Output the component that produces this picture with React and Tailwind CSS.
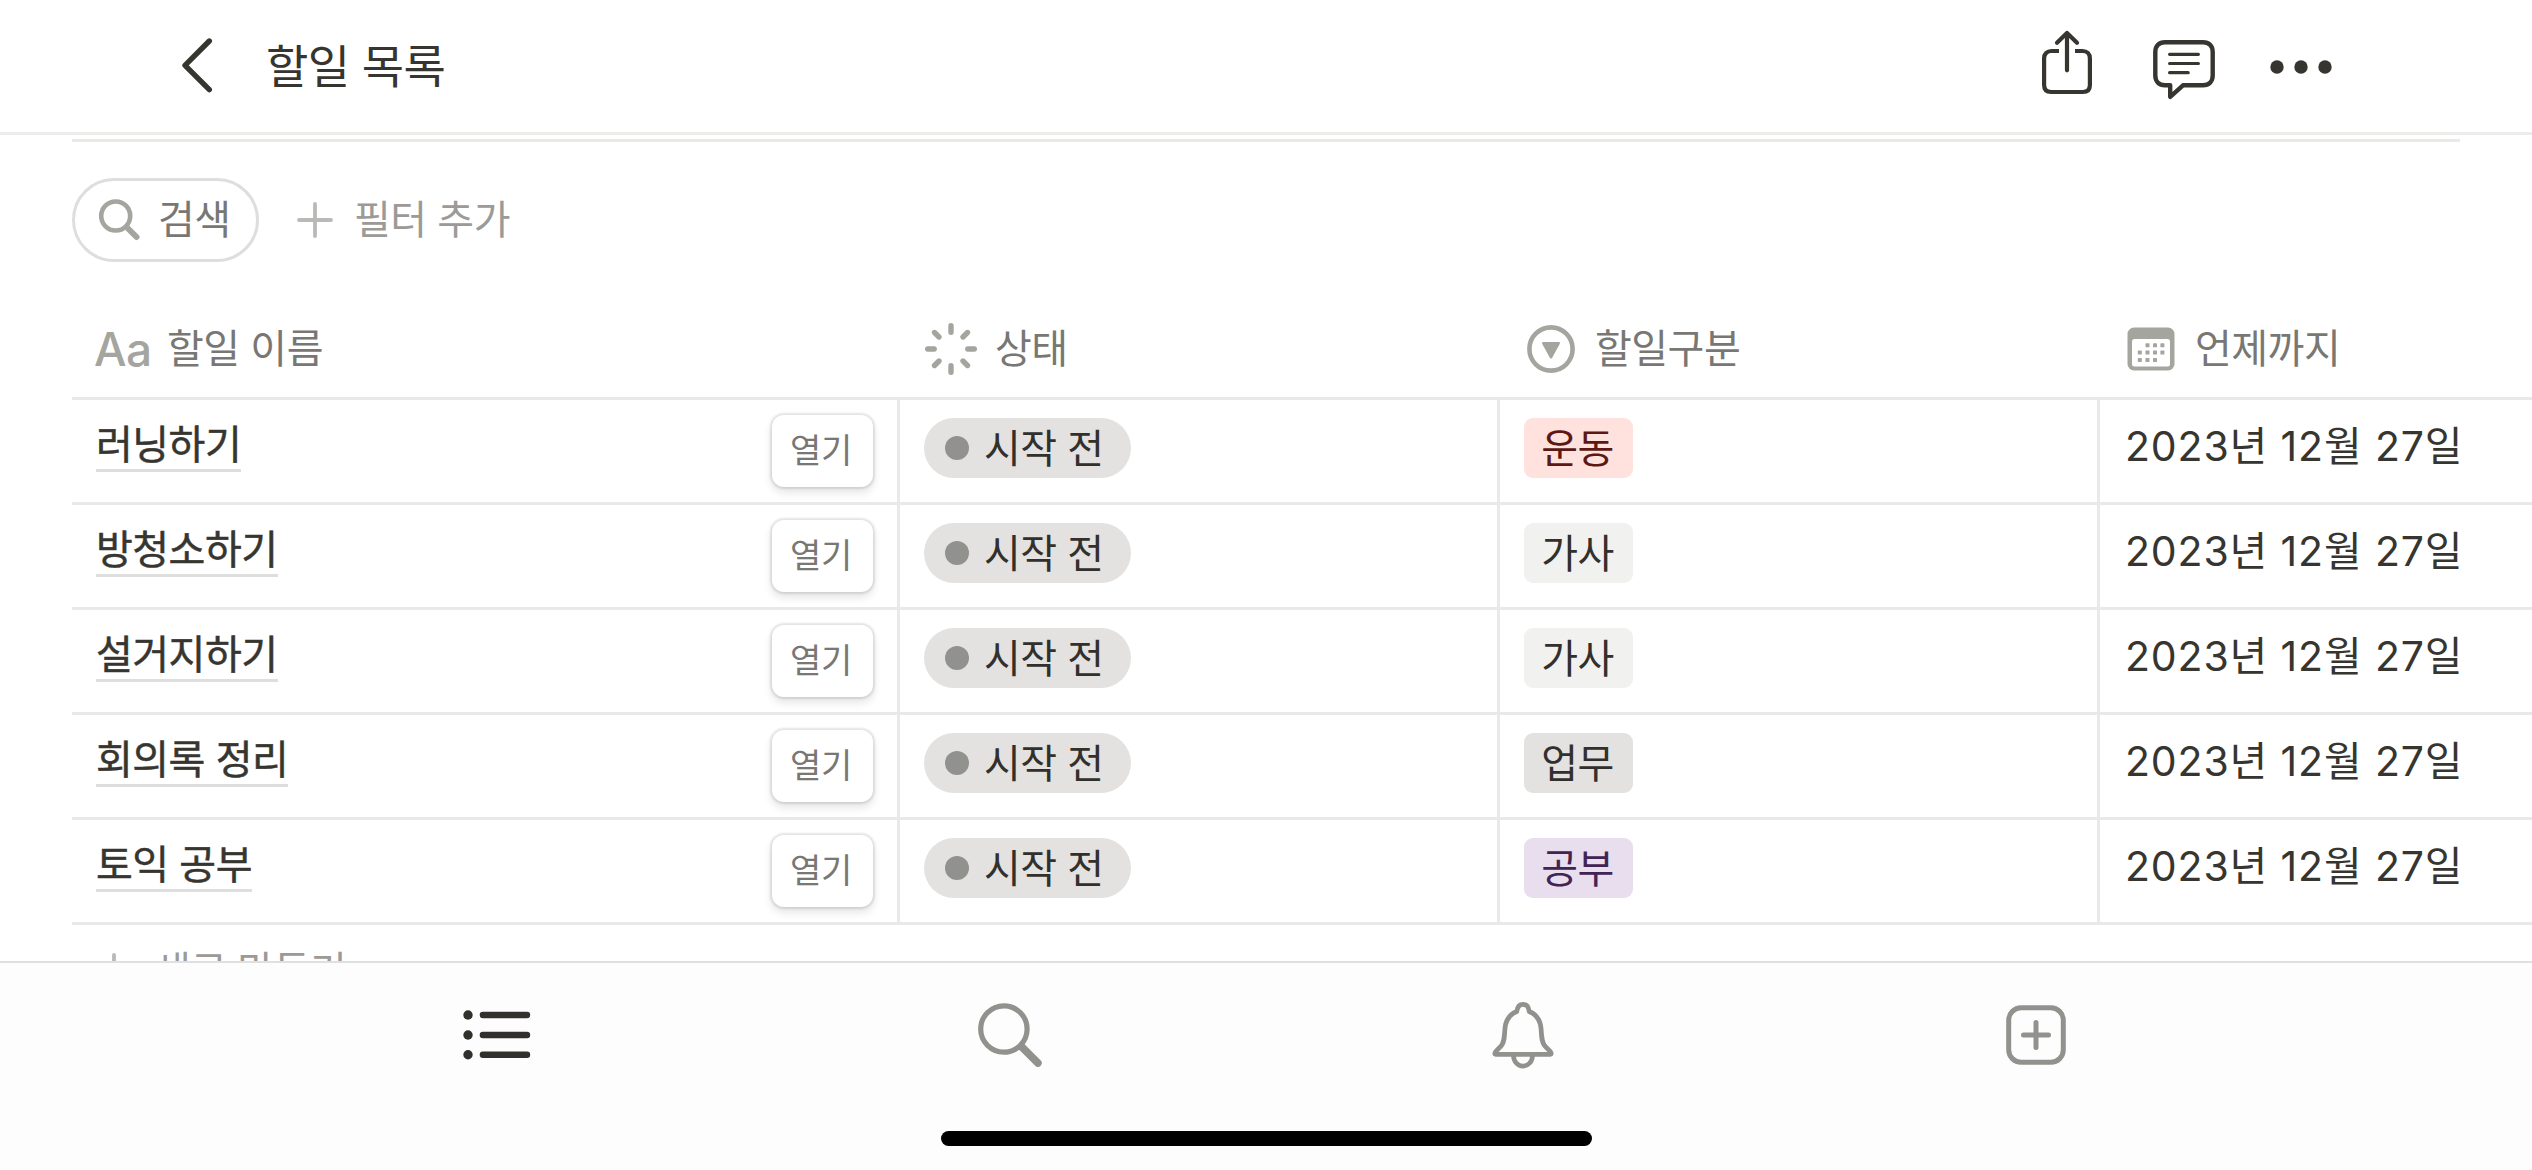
/* -------------------- DATA -------------------- */
const todos = [
  { name: "러닝하기", tag: "운동", tagClass: "bg-[#ffe2dd] text-[#5d1715]" },
  { name: "방청소하기", tag: "가사", tagClass: "bg-[#f1f1ef] text-[#32302c]" },
  { name: "설거지하기", tag: "가사", tagClass: "bg-[#f1f1ef] text-[#32302c]" },
  { name: "회의록 정리", tag: "업무", tagClass: "bg-[#e3e2e0] text-[#32302c]" },
  { name: "토익 공부", tag: "공부", tagClass: "bg-[#e8deee] text-[#412454]" },
];

/* -------------------- ICONS -------------------- */
function BackIcon() {
  return (
    <svg width="32" height="56" viewBox="0 0 32 56" fill="none" stroke="currentColor" strokeWidth="5.4" strokeLinecap="round" strokeLinejoin="round">
      <path d="M27.3 3 3 27.3l24.300 24.400" />
    </svg>
  );
}

function ShareIcon() {
  return (
    <svg width="50" height="72" viewBox="0 0 50 72" fill="none" stroke="currentColor" strokeWidth="4.2">
      <path d="M17 21H9.5c-4.5 0-7.4 3-7.4 7.400V55c0 4.500 2.500 7 7 7h31.800c4.500 0 7-2.500 7-7V28.400c0-4.400-2.900-7.400-7.400-7.400H33" />
      <path d="M25 40.300V3M15 12.800 25 3l10 9.800" strokeLinecap="round" strokeLinejoin="round" />
    </svg>
  );
}

function CommentIcon() {
  return (
    <svg width="62" height="60" viewBox="0 0 62 60" fill="none" stroke="currentColor" strokeLinecap="round" strokeLinejoin="round">
      <path strokeWidth="4.400" d="M12 2.300h38c6 0 9.700 3.700 9.700 9.700v23.500c0 6-3.700 9.800-9.700 9.800H30L17.200 56.800V45.300H12c-6 0-9.700-3.800-9.700-9.800V12c0-6 3.700-9.700 9.700-9.700Z" />
      <path strokeWidth="3.200" d="M16.600 14.300h28.800M16.600 23.500h28.800M16.600 32.700h18.600" />
    </svg>
  );
}

function MoreIcon() {
  return (
    <svg width="62" height="14" viewBox="0 0 62 14" fill="currentColor">
      <circle cx="7" cy="7" r="6.700" />
      <circle cx="31" cy="7" r="6.700" />
      <circle cx="55" cy="7" r="6.700" />
    </svg>
  );
}

function FilterSearchIcon() {
  return (
    <svg width="42" height="42" viewBox="0 0 42 42" fill="none" stroke="#a5a59f" strokeLinecap="round">
      <circle cx="17.700" cy="17" r="14.500" strokeWidth="4.600" />
      <path d="m28.500 28 10 10" strokeWidth="6" />
    </svg>
  );
}

function PlusIcon() {
  return (
    <svg width="36" height="36" viewBox="0 0 36 36" stroke="#b9b9b7" strokeWidth="3.800" strokeLinecap="round">
      <path d="M18 2v32M2 18h32" />
    </svg>
  );
}

function StatusIcon() {
  return (
    <svg width="54" height="54" viewBox="0 0 54 54" stroke="#a5a59f" strokeWidth="5.400" strokeLinecap="round">
      <path d="M27 3.700v6.500M27 43.800v6.500M3.700 27h6.500M43.800 27h6.500M10.500 10.500l4.500 4.500M39 39l4.500 4.500M10.500 43.500 15 39M39 15l4.500-4.500" />
    </svg>
  );
}

function SelectIcon() {
  return (
    <svg width="48" height="48" viewBox="0 0 48 48" fill="none">
      <circle cx="24" cy="24" r="21.600" stroke="#a5a59f" strokeWidth="4.600" />
      <path d="M16.200 18.200h15.600L24 32.300Z" fill="#a5a59f" stroke="#a5a59f" strokeWidth="2.400" strokeLinejoin="round" />
    </svg>
  );
}

function CalendarIcon() {
  const dots = [
    [20.500, 18.300], [28, 18.300], [35.400, 18.300],
    [12.800, 25.600], [20.500, 25.600], [28, 25.600], [35.400, 25.600],
    [12.800, 33], [20.500, 33], [28, 33],
  ];

  return (
    <svg width="48" height="44" viewBox="0 0 48 44" fill="#a5a59f">
      <rect x="0.500" y="0.500" width="47" height="43" rx="6.500" />
      <rect x="5" y="12" width="38" height="27.500" rx="2.500" fill="#fff" />
      {dots.map(([x, y]) => (
        <rect key={`${x}-${y}`} x={x - 2} y={y - 2} width="4" height="4" rx="0.600" />
      ))}
    </svg>
  );
}

function ListIcon() {
  return (
    <svg width="68" height="50" viewBox="0 0 68 50" fill="#32302c">
      {[5, 25, 44.700].map((y) => (
        <g key={y}>
          <circle cx="5" cy={y} r="4.700" />
          <rect x="16.700" y={y - 3.200} width="50.500" height="6.400" rx="3.200" />
        </g>
      ))}
    </svg>
  );
}

function SearchIcon() {
  return (
    <svg width="64" height="64" viewBox="0 0 64 64" fill="none" stroke="#91918e" strokeLinecap="round">
      <circle cx="25.900" cy="26" r="23.200" strokeWidth="5.200" />
      <path d="m43.900 44 16 16" strokeWidth="7.600" />
    </svg>
  );
}

function BellIcon() {
  return (
    <svg width="62" height="68" viewBox="11.500 10 62 68" fill="none" stroke="#91918e" strokeWidth="4.700" strokeLinejoin="round">
      <path d="M36.300 20.500c.5-4.300 2.700-7.200 6.200-7.200s5.700 2.900 6.200 7.200c7.300 3 11.300 8.500 11.900 17.500.5 9 .7 13 3.400 16.500 3 3.800 6.700 5.800 6.700 8.100 0 .5-.3.700-.8.700H15.100c-.5 0-.8-.2-.8-.7 0-2.300 3.700-4.300 6.700-8.100 2.700-3.500 2.900-7.500 3.400-16.500.6-9 4.600-14.500 11.900-17.500Z" />
      <path d="M33 64.500a9.500 10.600 0 0 0 19 0" />
    </svg>
  );
}

function NewPageIcon() {
  return (
    <svg width="60" height="60" viewBox="0 0 60 60" fill="none" stroke="#91918e" strokeWidth="5">
      <rect x="2.700" y="2.700" width="54.600" height="54.600" rx="12.500" />
      <path d="M30 17.500v25M17.500 30h25" strokeLinecap="round" />
    </svg>
  );
}

/* -------------------- TABLE ROW -------------------- */
function TodoRow({ todo }) {
  return (
    <div className="flex h-[105px] shrink-0 border-b-[3px] border-[#e9e9e7]">
      <div className="flex w-[828px] items-start justify-between border-r-[3px] border-[#e9e9e7] pr-6 pl-6">
        <span className="mt-[21px] border-b-[3px] border-[#dededd] leading-[48px] tracking-[-0.5px] text-[#37352f] [-webkit-text-stroke:0.5px_#37352f]">
          {todo.name}
        </span>
        <button className="mt-[15px] h-[72px] w-[101px] rounded-[12px] bg-white pr-[3px] text-[34px] leading-none tracking-[-0.3px] text-[#787774] shadow-[0_0_2px_2px_rgba(15,15,15,0.1),0_5px_10px_rgba(15,15,15,0.12)]">
          열기
        </button>
      </div>
      <div className="w-[600px] border-r-[3px] border-[#e9e9e7] pt-[18px] pl-6">
        <span className="inline-flex h-[60px] w-[207px] items-center gap-[15px] rounded-full bg-[#e3e2e0] pl-[21px] text-[#32302c]">
          <span className="size-6 rounded-full bg-[#91918e]" />
          <span className="pt-0.5 tracking-[-0.5px]">시작 전</span>
        </span>
      </div>
      <div className="w-[600px] border-r-[3px] border-[#e9e9e7] pt-[18px] pl-6">
        <span className={`flex h-[60px] w-[109px] items-center justify-center rounded-[9px] pt-0.5 pr-0.5 tracking-[-0.5px] ${todo.tagClass}`}>
          {todo.tag}
        </span>
      </div>
      <div className="pt-5 pl-[25px] text-[41px] leading-[52px] tracking-[0.85px] whitespace-nowrap text-[#37352f]">
        2023년 12월 27일
      </div>
    </div>
  );
}

export default function App() {
  return (
    <div className="flex h-[1170px] w-[2532px] flex-col overflow-hidden bg-white font-['Inter','Noto_Sans_CJK_KR',sans-serif] text-[40px] leading-[52px]">
      {/* ==================== TOP BAR ==================== */}
      <header className="flex h-[135px] shrink-0 items-center border-b-[3px] border-[#ececeb] pr-[200px] pl-[182px] text-[#37352f]">
        <BackIcon />
        <h1 className="ml-[52px] flex-1 text-[46px] tracking-[-0.6px]">할일 목록</h1>
        <div className="flex items-center">
          <ShareIcon />
          <div className="mt-[7px] ml-[61px]">
            <CommentIcon />
          </div>
          <div className="mt-0.5 ml-[55px]">
            <MoreIcon />
          </div>
        </div>
      </header>

      <main className="flex min-h-0 flex-1 flex-col overflow-hidden pt-1 pl-[72px]">
        <div className="mr-[72px] h-[3px] shrink-0 bg-[#e9e9e7]" />

        {/* ==================== FILTERS ==================== */}
        <div className="mt-9 flex h-[84px] shrink-0 items-center">
          <button className="flex h-full w-[187px] items-center gap-[18px] rounded-full border-[3px] border-[#dededd] pl-[23px] tracking-[-0.5px] text-[#787774]">
            <FilterSearchIcon />
            검색
          </button>
          <button className="ml-[38px] flex items-center gap-[21px] tracking-[-0.5px] text-[#9b9a97]">
            <PlusIcon />
            필터 추가
          </button>
        </div>

        {/* ==================== TABLE ==================== */}
        <div className="mt-9 flex h-[102px] shrink-0 items-center border-b-[3px] border-[#e9e9e7] pt-[3px] tracking-[-0.5px] whitespace-nowrap text-[#787774]">
          <div className="flex w-[828px] items-center gap-[18px] pl-[22px]">
            <span className="w-[55px] text-[46px] font-medium tracking-[-0.5px] text-[#a5a59f]">Aa</span>
            할일 이름
          </div>
          <div className="flex w-[600px] items-center gap-[17px] pl-6">
            <StatusIcon />
            상태
          </div>
          <div className="flex w-[600px] items-center gap-5 pl-[27px]">
            <SelectIcon />
            할일구분
          </div>
          <div className="flex items-center gap-5 pl-[27px]">
            <CalendarIcon />
            언제까지
          </div>
        </div>

        {todos.map((todo) => (
          <TodoRow key={todo.name} todo={todo} />
        ))}

        <div className="flex h-[92px] shrink-0 items-center gap-[22px] pl-6 tracking-[-0.5px] text-[#9b9a97]">
          <PlusIcon />
          새로 만들기
        </div>
      </main>

      {/* ==================== BOTTOM BAR ==================== */}
      <nav className="flex h-[209px] shrink-0 flex-col items-center border-t-2 border-[#e0e0e0] bg-[#fdfdfd]">
        <div className="grid h-[144px] w-[2052px] grid-cols-4 place-items-center">
          <ListIcon />
          <SearchIcon />
          <BellIcon />
          <NewPageIcon />
        </div>
        <div className="mt-6 h-[15px] w-[651px] rounded-full bg-black" />
      </nav>
    </div>
  );
}
